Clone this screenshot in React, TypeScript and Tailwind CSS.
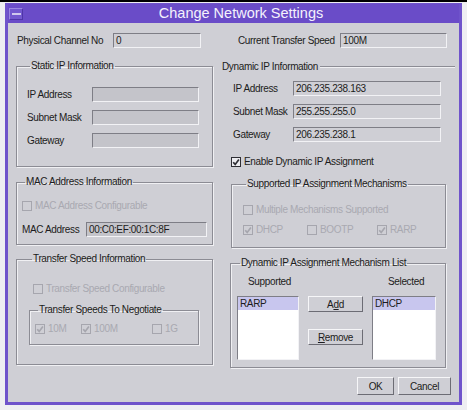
import React from "react";

const font = "font-['Liberation_Sans',Arial,sans-serif]";
const sunken =
  "border border-t-[#7e7e86] border-l-[#7e7e86] border-b-[#f2f2f5] border-r-[#f2f2f5]";
const raised =
  "border border-t-[#f6f6f8] border-l-[#f6f6f8] border-b-[#6c6c74] border-r-[#6c6c74]";
const groupBorder = "border border-[#8c8c94] shadow-[inset_1px_1px_0_#f0f0f3,1px_1px_0_#f0f0f3]";

function Check({ checked = false, disabled = false }: { checked?: boolean; disabled?: boolean }) {
  const stroke = disabled ? "#a6a6ae" : "#2e2e34";
  return (
    <svg width="10" height="10" viewBox="0 0 10 10" className="shrink-0">
      <rect x="0.5" y="0.5" width="9" height="9" fill={disabled ? "none" : "#ececf0"} stroke={stroke} />
      {checked && (
        <path d="M2.2 5.2 L4.2 7.4 L7.9 2.4" fill="none" stroke={stroke} strokeWidth="1.7" />
      )}
    </svg>
  );
}

function Field({ w, value, fill }: { w: number; value?: string; fill?: boolean }) {
  return (
    <div
      className={`${sunken} h-[15px] shrink-0 px-[2px] leading-[13px] text-[#1c1c20] ${
        fill ? "bg-[#c4c4ca]" : ""
      }`}
      style={{ width: w }}
    >
      {value}
    </div>
  );
}

function Legend({ children }: { children: React.ReactNode }) {
  return <legend className="ml-[3px] px-[1px] leading-[12px] text-[#1c1c20]">{children}</legend>;
}

function Box({ label, checked, disabled }: { label: string; checked?: boolean; disabled?: boolean }) {
  return (
    <div className="flex h-[12px] items-center gap-[3px]">
      <Check checked={checked} disabled={disabled} />
      <span className={`leading-[12px] ${disabled ? "text-[#a9a9b1]" : "text-[#1c1c20]"}`}>{label}</span>
    </div>
  );
}

function Btn({ w, h = 16, children }: { w: number; h?: number; children: React.ReactNode }) {
  return (
    <div
      className={`${raised} flex items-center justify-center text-[#1c1c20]`}
      style={{ width: w, height: h }}
    >
      {children}
    </div>
  );
}

export default function App() {
  return (
    <div
      className={`${font} h-[410px] w-[467px] overflow-hidden whitespace-nowrap bg-[#eeeef2] text-[10px] tracking-[-0.35px]`}
    >
      <div className="h-[2px] bg-black" />
      <div className="ml-[5px] mt-[1px] w-[457px] border-x-[3px] border-b-[3px] border-t border-[#6f53cb] bg-[#6a4cc8]">
        {/* title bar */}
        <div className="flex h-[19px] items-center">
          <div className="ml-[1px] flex h-[12px] w-[14px] items-center justify-center border border-t-[#9a86e0] border-l-[#9a86e0] border-b-[#4f35a8] border-r-[#4f35a8] bg-[#7258cf]">
            <div className="h-[2px] w-[9px] bg-[#cfc8ee]" />
          </div>
          <div className="flex-1 text-center text-[14.5px] leading-[19px] tracking-normal text-[#f4f2fc]">
            Change Network Settings
          </div>
        </div>

        {/* body */}
        <div className="h-[379px] bg-[#cfcfd5] pt-[10px] text-[#1c1c20]">
          <div className="flex h-[15px] items-center">
            <div className="flex w-[230px] items-center pl-[9px]">
              <span className="w-[96px]">Physical Channel No</span>
              <Field w={88} value="0" />
            </div>
            <div className="flex items-center">
              <span className="w-[102px]">Current Transfer Speed</span>
              <Field w={107} value="100M" />
            </div>
          </div>

          <div className="mt-[12px] flex">
            {/* left column */}
            <div className="ml-[8px] flex w-[197px] flex-col">
              <fieldset className={`${groupBorder} px-[10px] pb-[18px] pt-[15px]`}>
                <Legend>Static IP Information</Legend>
                <div className="flex flex-col gap-[8px]">
                  {["IP Address", "Subnet Mask", "Gateway"].map((l) => (
                    <div key={l} className="flex h-[15px] items-center">
                      <span className="w-[65px]">{l}</span>
                      <Field w={107} fill />
                    </div>
                  ))}
                </div>
              </fieldset>

              <fieldset className={`${groupBorder} mt-[9px] pb-[7px] pl-[5px] pt-[12px]`}>
                <Legend>MAC Address Information</Legend>
                <Box label="MAC Address Configurable" disabled />
                <div className="mt-[10px] flex h-[15px] items-center">
                  <span className="w-[64px]">MAC Address</span>
                  <Field w={121} value="00:C0:EF:00:1C:8F" fill />
                </div>
              </fieldset>

              <fieldset className={`${groupBorder} mt-[8px] pb-[19px] pl-[12px] pt-[18px]`}>
                <Legend>Transfer Speed Information</Legend>
                <div className="ml-[4px]">
                  <Box label="Transfer Speed Configurable" disabled />
                </div>
                <fieldset className={`${groupBorder} mt-[9px] w-[170px] pb-[9px] pl-[5px] pt-[7px]`}>
                  <Legend>Transfer Speeds To Negotiate</Legend>
                  <div className="flex">
                    <div className="w-[46px]">
                      <Box label="10M" checked disabled />
                    </div>
                    <div className="w-[71px]">
                      <Box label="100M" checked disabled />
                    </div>
                    <Box label="1G" disabled />
                  </div>
                </fieldset>
              </fieldset>
            </div>

            {/* right column */}
            <div className="ml-[9px] flex w-[233px] flex-col">
              <div className="mt-[1px] flex h-[12px] items-center gap-[2px]">
                <span className="leading-[12px]">Dynamic IP Information</span>
                <div className="h-[2px] flex-1 border-t border-b border-t-[#8c8c94] border-b-[#f0f0f3]" />
              </div>
              <div className="mt-[8px] flex flex-col gap-[8px] pl-[11px]">
                {[
                  ["IP Address", "206.235.238.163"],
                  ["Subnet Mask", "255.255.255.0"],
                  ["Gateway", "206.235.238.1"],
                ].map(([l, v]) => (
                  <div key={l} className="flex h-[15px] items-center">
                    <span className="w-[60px]">{l}</span>
                    <Field w={148} value={v} />
                  </div>
                ))}
              </div>
              <div className="ml-[9px] mt-[14px]">
                <Box label="Enable Dynamic IP Assignment" checked />
              </div>

              <fieldset className={`${groupBorder} ml-[9px] mt-[10px] w-[215px] pb-[11px] pl-[11px] pt-[14px]`}>
                <Legend>Supported IP Assignment Mechanisms</Legend>
                <Box label="Multiple Mechanisms Supported" disabled />
                <div className="mt-[8px] flex">
                  <div className="w-[64px]">
                    <Box label="DHCP" checked disabled />
                  </div>
                  <div className="w-[70px]">
                    <Box label="BOOTP" disabled />
                  </div>
                  <Box label="RARP" checked disabled />
                </div>
              </fieldset>

              <fieldset className={`${groupBorder} ml-[8px] mt-[9px] w-[216px] pb-[7px] pl-[6px] pt-[7px]`}>
                <Legend>Dynamic IP Assignment Mechanism List</Legend>
                <div className="flex h-[12px] leading-[12px]">
                  <span className="ml-[11px] w-[140px]">Supported</span>
                  <span>Selected</span>
                </div>
                <div className="mt-[8px] flex gap-[9px]">
                  <div className={`${sunken} h-[64px] w-[62px] bg-white`}>
                    <div className="h-[13px] bg-[#c8c6ee] px-[2px] leading-[13px]">RARP</div>
                  </div>
                  <div className="flex flex-col gap-[17px]">
                    <Btn w={55}>
                      A<span className="underline">d</span>d
                    </Btn>
                    <Btn w={55}>
                      <span className="underline">R</span>emove
                    </Btn>
                  </div>
                  <div className={`${sunken} h-[64px] w-[64px] bg-white`}>
                    <div className="h-[13px] bg-[#c8c6ee] px-[2px] leading-[13px]">DHCP</div>
                  </div>
                </div>
              </fieldset>
            </div>
          </div>

          <div className="mt-[9px] flex justify-end gap-[4px] pr-[8px]">
            <Btn w={37} h={18}>
              OK
            </Btn>
            <Btn w={53} h={18}>
              Cancel
            </Btn>
          </div>
        </div>
      </div>
    </div>
  );
}
